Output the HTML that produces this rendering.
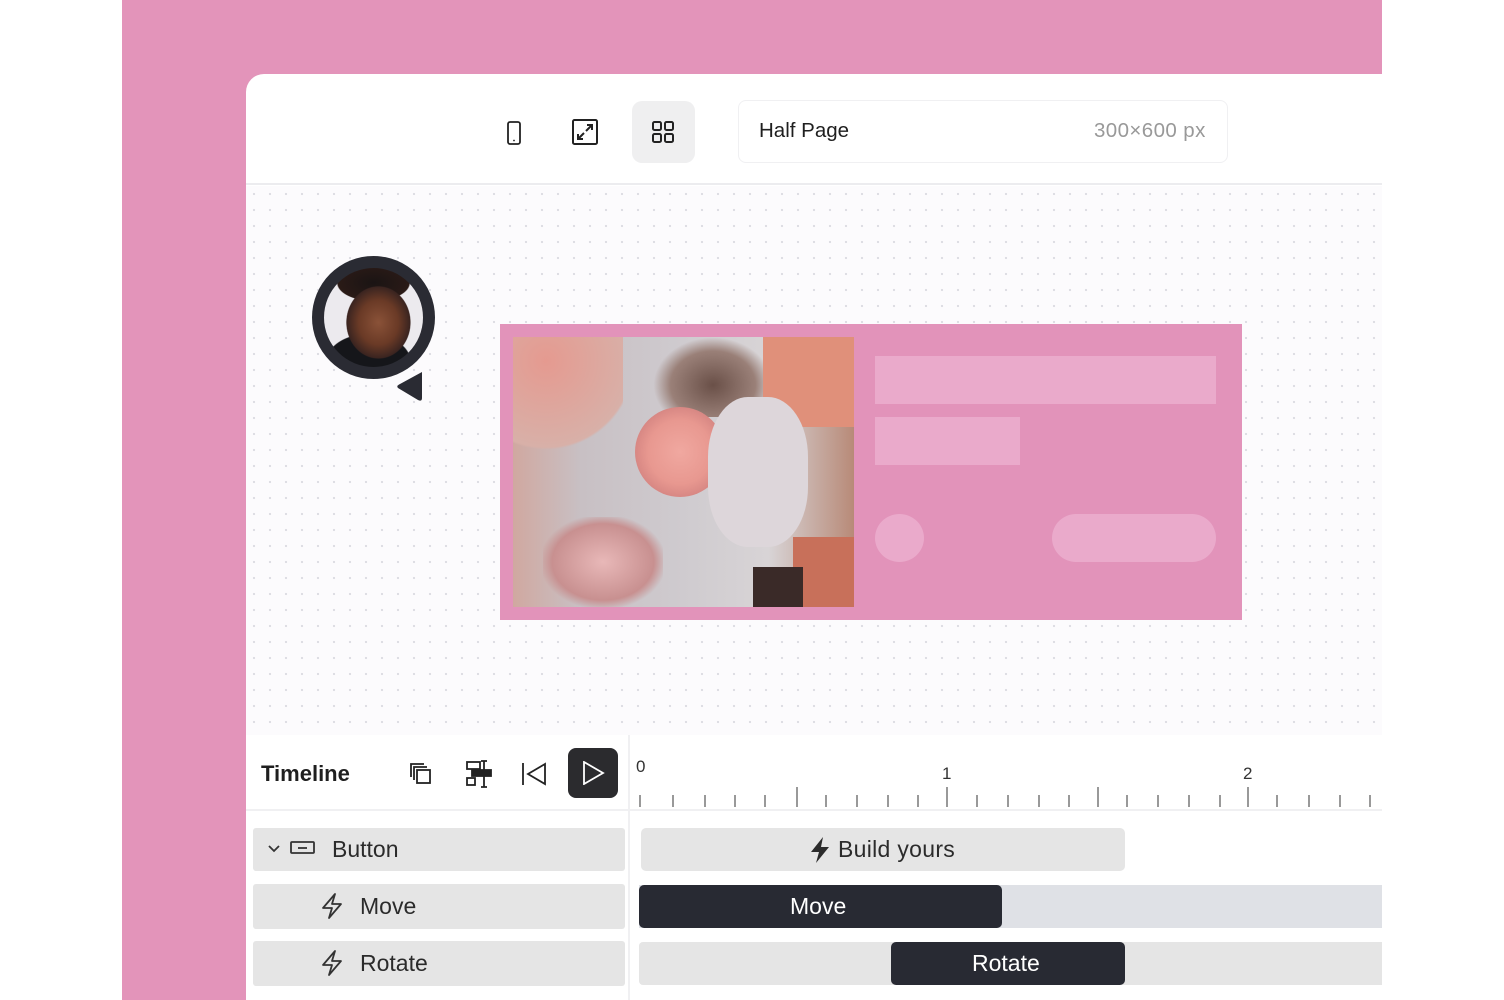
<!DOCTYPE html>
<html><head><meta charset="utf-8"><style>
*{margin:0;padding:0;box-sizing:border-box}
body{width:1504px;height:1000px;background:#fff;font-family:"Liberation Sans",sans-serif;position:relative;overflow:hidden}
.pink{position:absolute;left:122px;top:0;width:1260px;height:1000px;background:#e394ba}
.win{position:absolute;left:246px;top:74px;width:1136px;height:926px;background:#fff;border-top-left-radius:18px;overflow:hidden}
.top{position:absolute;left:0;top:0;width:100%;height:111px;border-bottom:2px solid #ececef}
.canvas{position:absolute;left:0;top:112px;width:100%;height:549px;background-color:#fcfbfd;background-image:radial-gradient(circle,#dcdce2 1px,transparent 1.3px);background-size:16px 16px}
.abs{position:absolute}
.row{position:absolute;background:#e5e5e5;border-radius:3px}
.t{font-size:23px;color:#2b2b2b}
.tick{position:absolute;bottom:0;width:1.5px;background:#999}
</style></head><body>
<div class="pink"></div>
<div class="win">
 <div class="top">
  <svg class="abs" style="left:258px;top:46px" width="20" height="26" viewBox="0 0 20 26"><rect x="4" y="2" width="12" height="22" rx="2" fill="none" stroke="#222" stroke-width="1.8"/><circle cx="10" cy="20.5" r="0.9" fill="#222"/></svg>
  <svg class="abs" style="left:325px;top:44px" width="28" height="28" viewBox="0 0 28 28"><rect x="2" y="2" width="24" height="24" rx="1.5" fill="none" stroke="#222" stroke-width="2"/><path d="M16 7h5v5M21 7l-6 6M7 16v5h5M7 21l6-6" fill="none" stroke="#222" stroke-width="2"/></svg>
  <div class="abs" style="left:386px;top:27px;width:63px;height:62px;background:#efeff0;border-radius:10px"></div>
  <svg class="abs" style="left:405px;top:46px" width="24" height="24" viewBox="0 0 24 24" fill="none" stroke="#222" stroke-width="2"><rect x="2" y="2" width="8" height="8" rx="1.5"/><rect x="14" y="2" width="8" height="8" rx="1.5"/><rect x="2" y="14" width="8" height="8" rx="1.5"/><rect x="14" y="14" width="8" height="8" rx="1.5"/></svg>
  <div class="abs" style="left:492px;top:26px;width:490px;height:63px;border:1.5px solid #f0f0f2;border-radius:8px"></div>
  <div class="abs" style="left:513px;top:45px;font-size:20.5px;color:#1f1f1f">Half Page</div>
  <div class="abs" style="left:848px;top:45px;font-size:20.5px;color:#999;letter-spacing:0.4px">300×600 px</div>
 </div>
 <div class="canvas">
  <div class="abs" style="left:66px;top:70px;width:123px;height:123px;border-radius:50%;background:#2a2b33"></div>
  <div class="abs" style="left:78px;top:82px;width:99px;height:99px;border-radius:50%;background:radial-gradient(ellipse 40% 45% at 55% 55%,#8a5238 0,#6a3a26 50%,#3a2420 80%,transparent 82%),radial-gradient(ellipse 60% 30% at 50% 15%,#1a1414 0,#2a1a16 60%,transparent 62%),radial-gradient(ellipse 60% 40% at 45% 95%,#15161a 0,#15161a 70%,transparent 72%),#eceaee"></div>
  <svg class="abs" style="left:148px;top:182px" width="32" height="36" viewBox="0 0 32 36"><path d="M28 4 L28 30 Q28 34 24 32 L4 20 Q2 18 6 16 Z" fill="#2a2b33"/></svg>
  <div class="abs" style="left:254px;top:138px;width:742px;height:296px;background:#e293ba"></div>
  <div class="abs" style="left:267px;top:151px;width:341px;height:270px;overflow:hidden;background:linear-gradient(90deg,#d0a8a0 0,#c8c0c4 20%,#cfcbcf 50%,#d8d4d6 75%,#b88a78 100%)">
   <div class="abs" style="left:0;top:0;width:110px;height:120px;background:radial-gradient(circle at 30% 20%,#e59a90,#d8b0a8 70%,transparent 72%)"></div>
   <div class="abs" style="left:140px;top:0;width:120px;height:80px;background:radial-gradient(ellipse at 50% 60%,#6a5048,#9a8078 50%,transparent 70%)"></div>
   <div class="abs" style="left:250px;top:0;width:91px;height:90px;background:#e0907a"></div>
   <div class="abs" style="left:122px;top:70px;width:90px;height:90px;border-radius:50%;background:radial-gradient(circle,#f0a8a0 0,#e89890 50%,#c87878 90%)"></div>
   <div class="abs" style="left:195px;top:60px;width:100px;height:150px;border-radius:40%;background:#ddd6da"></div>
   <div class="abs" style="left:30px;top:180px;width:120px;height:90px;background:radial-gradient(ellipse,#e8b8b8,#c89090 60%,transparent 75%)"></div>
   <div class="abs" style="left:280px;top:200px;width:61px;height:70px;background:#c8705a"></div>
   <div class="abs" style="left:240px;top:230px;width:50px;height:40px;background:#3a2a28"></div>
  </div>
  <div class="abs" style="left:629px;top:170px;width:341px;height:48px;background:#eaaacb"></div>
  <div class="abs" style="left:629px;top:231px;width:145px;height:48px;background:#eaaacb"></div>
  <div class="abs" style="left:629px;top:328px;width:49px;height:48px;border-radius:50%;background:#eaaacb"></div>
  <div class="abs" style="left:806px;top:328px;width:164px;height:48px;border-radius:24px;background:#eaaacb"></div>
 </div>
 <!-- timeline -->
 <div class="abs" style="left:0;top:661px;width:100%;height:265px;background:#fff"></div>
 <div class="abs" style="left:0;top:735px;width:100%;height:2px;background:#f0f0f2"></div>
 <div class="abs" style="left:382px;top:661px;width:2px;height:265px;background:#f0f0f2"></div>
 <div class="abs" style="left:15px;top:687px;font-size:22px;font-weight:bold;color:#1f1f1f">Timeline</div>
 <svg class="abs" style="left:163px;top:688px" width="24" height="24" viewBox="0 0 24 24" fill="none" stroke="#222" stroke-width="1.8"><rect x="8" y="8" width="13" height="13"/><path d="M5 18V5h13M2 15V2h13"/></svg>
 <svg class="abs" style="left:219px;top:686px" width="28" height="28" viewBox="0 0 28 28" fill="none" stroke="#222" stroke-width="1.8"><rect x="2" y="2" width="13" height="7"/><rect x="2" y="18" width="8" height="7"/><rect x="7" y="10" width="19" height="6" fill="#222"/><path d="M19 1v26M16 1h6M16 27h6"/></svg>
 <svg class="abs" style="left:275px;top:688px" width="26" height="24" viewBox="0 0 26 24" fill="none" stroke="#222" stroke-width="1.8"><path d="M2 1v22M24 2L7 12l17 10z"/></svg>
 <div class="abs" style="left:322px;top:674px;width:50px;height:50px;background:#2b2b2e;border-radius:8px"></div>
 <svg class="abs" style="left:335px;top:687px" width="24" height="24" viewBox="0 0 24 24" fill="none" stroke="#fff" stroke-width="1.8"><path d="M3 1v22l19-11z"/></svg>
 <div class="abs" style="left:390px;top:683px;font-size:17px;color:#333">0</div>
 <div class="abs" style="left:696px;top:690px;font-size:17px;color:#333">1</div>
 <div class="abs" style="left:997px;top:690px;font-size:17px;color:#333">2</div>
 <div class="abs" style="left:0;top:700px;width:100%;height:33px">
  <div class="tick" style="left:393px;height:12px"></div><div class="tick" style="left:426px;height:12px"></div><div class="tick" style="left:458px;height:12px"></div><div class="tick" style="left:488px;height:12px"></div><div class="tick" style="left:518px;height:12px"></div><div class="tick" style="left:550px;height:20px"></div><div class="tick" style="left:579px;height:12px"></div><div class="tick" style="left:610px;height:12px"></div><div class="tick" style="left:641px;height:12px"></div><div class="tick" style="left:671px;height:12px"></div><div class="tick" style="left:700px;height:20px"></div><div class="tick" style="left:730px;height:12px"></div><div class="tick" style="left:761px;height:12px"></div><div class="tick" style="left:792px;height:12px"></div><div class="tick" style="left:822px;height:12px"></div><div class="tick" style="left:851px;height:20px"></div><div class="tick" style="left:880px;height:12px"></div><div class="tick" style="left:911px;height:12px"></div><div class="tick" style="left:942px;height:12px"></div><div class="tick" style="left:973px;height:12px"></div><div class="tick" style="left:1001px;height:20px"></div><div class="tick" style="left:1030px;height:12px"></div><div class="tick" style="left:1062px;height:12px"></div><div class="tick" style="left:1093px;height:12px"></div><div class="tick" style="left:1123px;height:12px"></div>
 </div>
 <!-- left rows -->
 <div class="row" style="left:7px;top:754px;width:372px;height:43px"></div>
 <svg class="abs" style="left:21px;top:769px" width="14" height="12" viewBox="0 0 14 12" fill="none" stroke="#333" stroke-width="1.8"><path d="M2 3l5 5 5-5"/></svg>
 <svg class="abs" style="left:43px;top:766px" width="28" height="16" viewBox="0 0 28 16" fill="none" stroke="#333" stroke-width="1.8"><rect x="2" y="2" width="23" height="11" rx="1"/><path d="M9 8h9"/></svg>
 <div class="abs t" style="left:86px;top:762px">Button</div>
 <div class="row" style="left:7px;top:810px;width:372px;height:45px"></div>
 <svg class="abs" style="left:74px;top:818px" width="24" height="28" viewBox="0 0 24 28" fill="none" stroke="#333" stroke-width="1.8" stroke-linejoin="round"><path d="M15 2L3 16h9l-3 10 12-14h-9z"/></svg>
 <div class="abs t" style="left:114px;top:819px">Move</div>
 <div class="row" style="left:7px;top:867px;width:372px;height:45px"></div>
 <svg class="abs" style="left:74px;top:875px" width="24" height="28" viewBox="0 0 24 28" fill="none" stroke="#333" stroke-width="1.8" stroke-linejoin="round"><path d="M15 2L3 16h9l-3 10 12-14h-9z"/></svg>
 <div class="abs t" style="left:114px;top:876px">Rotate</div>
 <!-- right rows -->
 <div class="row" style="left:395px;top:754px;width:484px;height:43px;border-radius:5px"></div>
 <svg class="abs" style="left:563px;top:762px" width="22" height="28" viewBox="0 0 22 28"><path d="M14 1L2 16h8l-3 11 13-16h-8z" fill="#2b2b2b"/></svg>
 <div class="abs t" style="left:592px;top:762px;letter-spacing:0.3px">Build yours</div>
 <div class="abs" style="left:393px;top:811px;width:743px;height:43px;background:#dfe1e6"></div>
 <div class="abs" style="left:393px;top:811px;width:363px;height:43px;background:#282a33;border-radius:5px"></div>
 <div class="abs" style="left:544px;top:819px;font-size:23px;color:#fff">Move</div>
 <div class="abs" style="left:393px;top:868px;width:743px;height:43px;background:#e5e5e5;border-radius:4px 0 0 4px"></div>
 <div class="abs" style="left:645px;top:868px;width:234px;height:43px;background:#282a33;border-radius:5px"></div>
 <div class="abs" style="left:726px;top:876px;font-size:23px;color:#fff">Rotate</div>
</div>
</body></html>
